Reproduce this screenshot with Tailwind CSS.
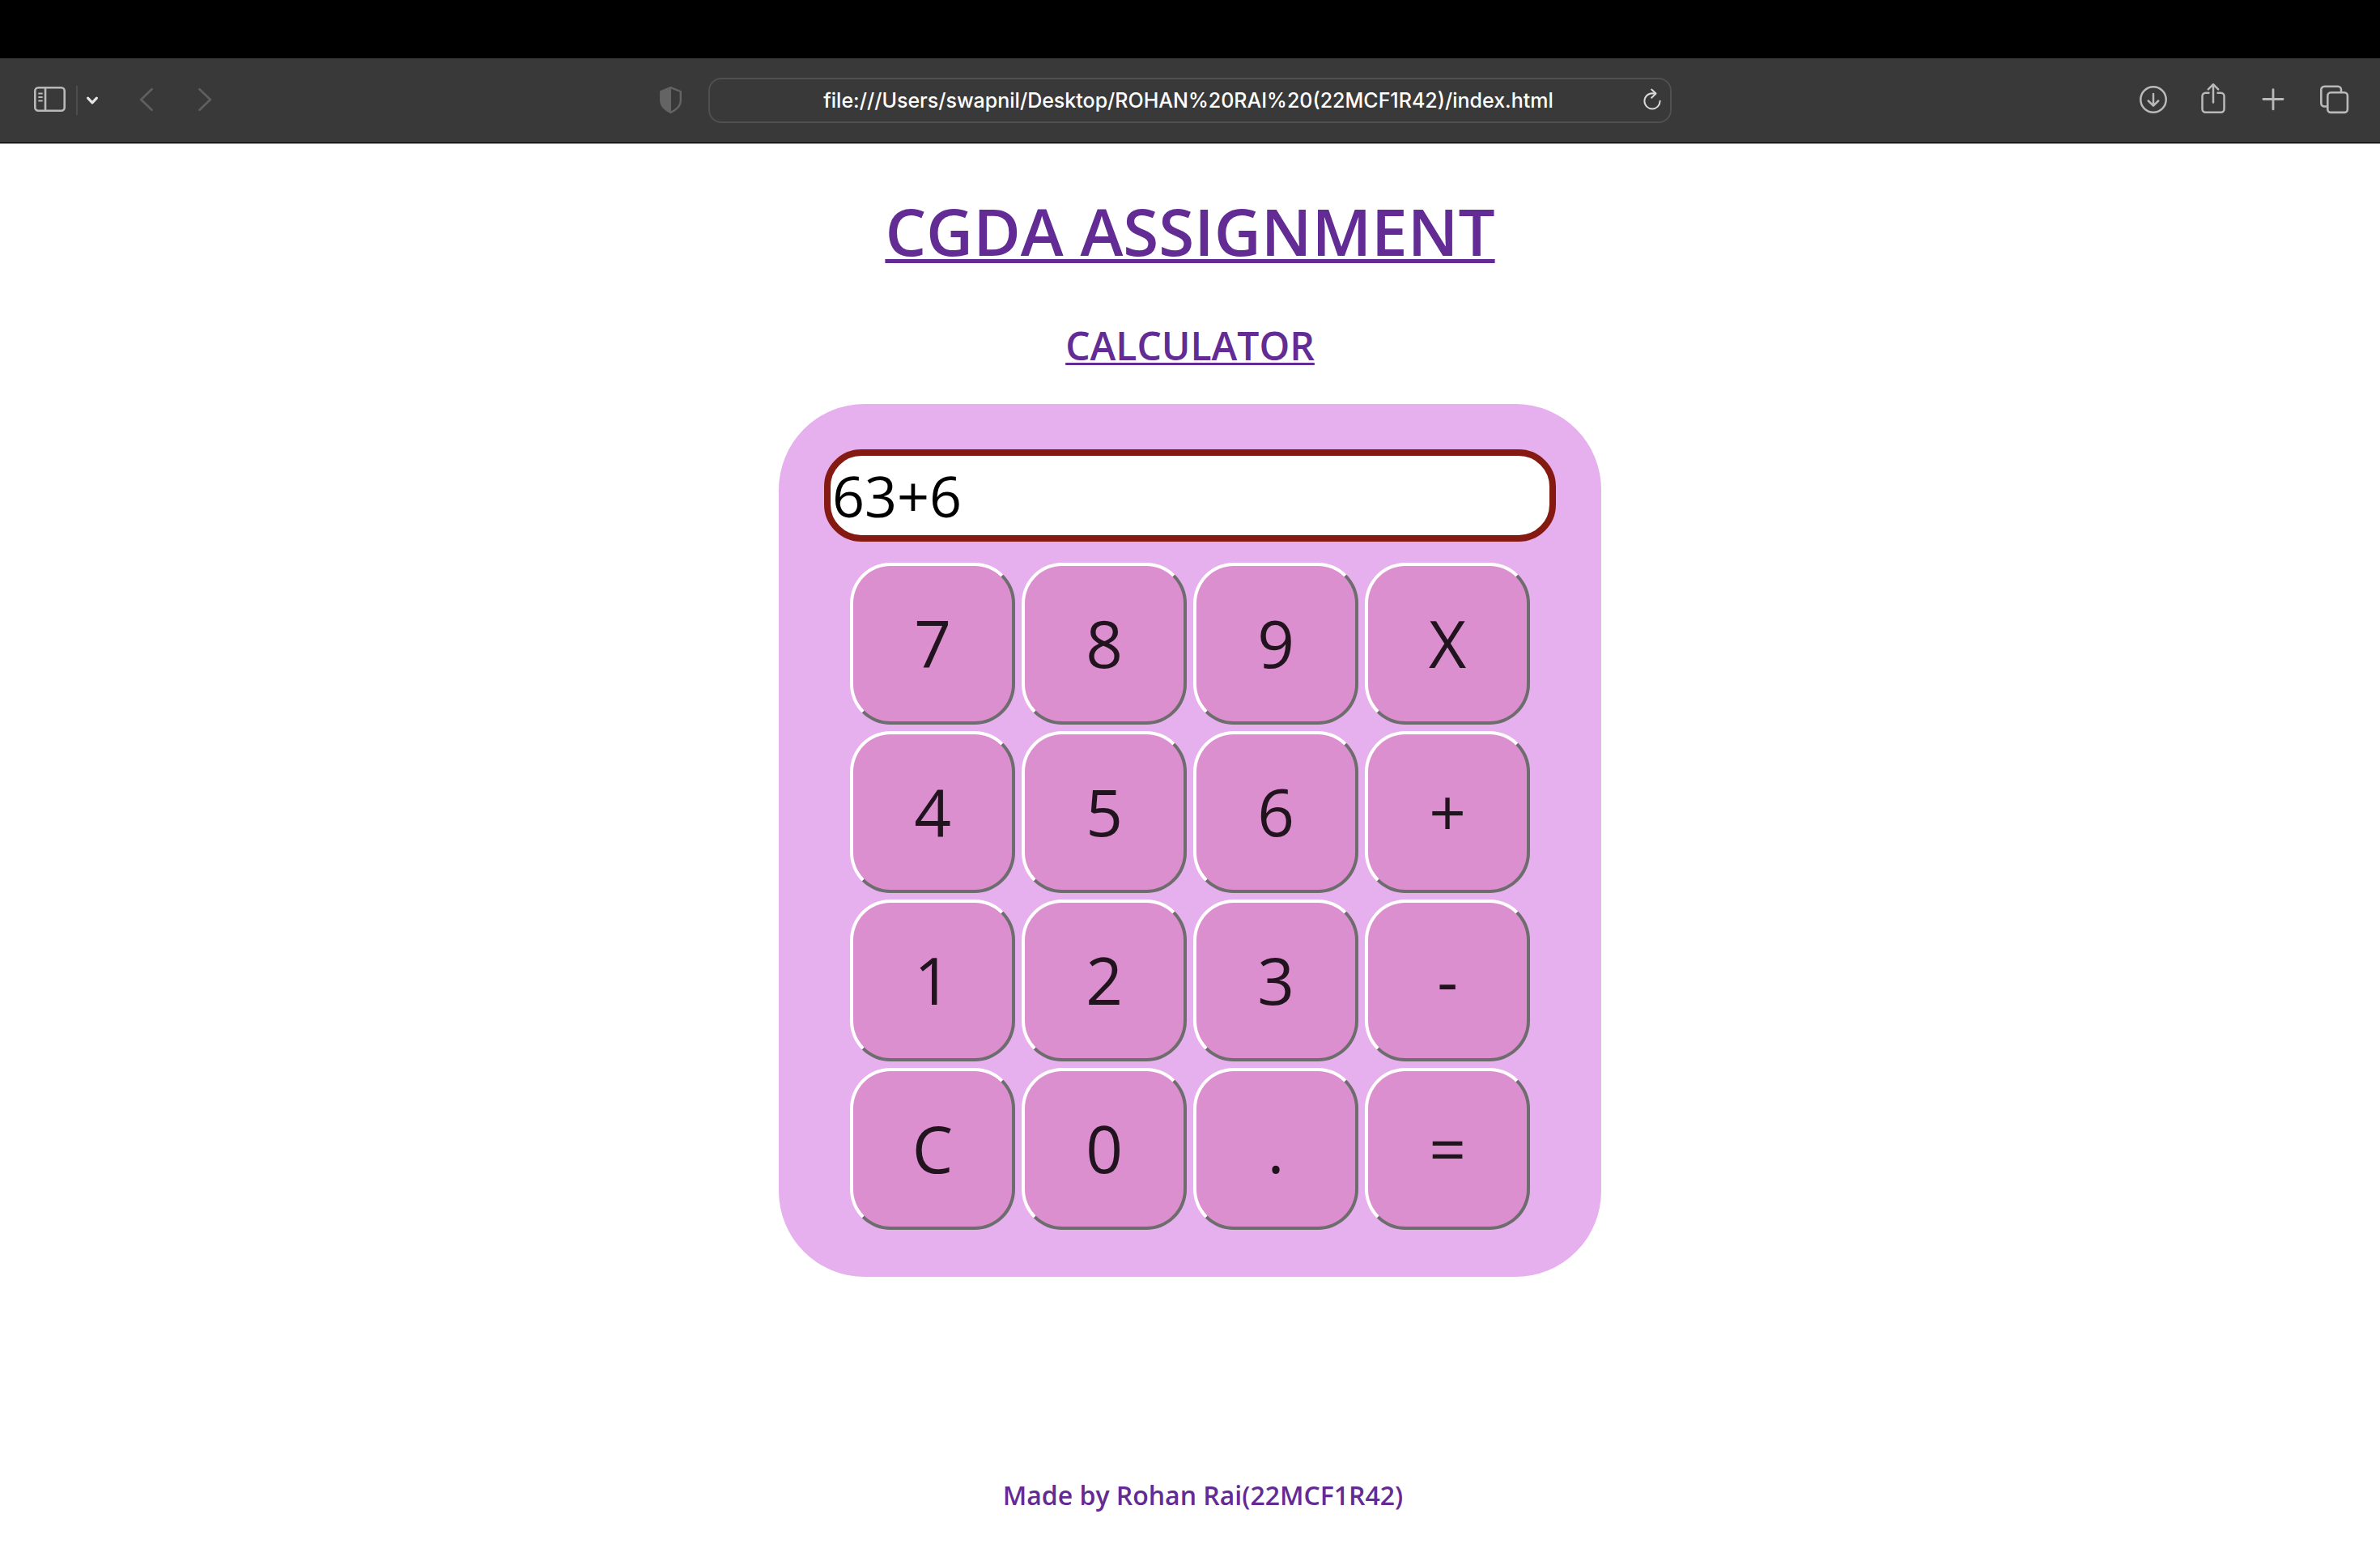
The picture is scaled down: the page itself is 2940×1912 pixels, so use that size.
<!DOCTYPE html>
<html lang="en">
<head>
<meta charset="utf-8">
<title>Calculator</title>
<script src="https://cdn.jsdelivr.net/npm/@tailwindcss/browser@4"></script>
</head>
<body class="flex min-h-screen flex-col bg-white font-['Open_Sans',sans-serif] text-[#622c94]">
<div class="h-[72px] shrink-0 bg-black"></div>
<header class="grid h-[106px] shrink-0 grid-cols-[1fr_minmax(0,1190px)_1fr] items-center border-b border-[#b0b0b0] bg-[#393939] pb-px text-[#b9b9b9] shadow-[inset_0_-1px_0_#000]">
  <div class="flex items-center pl-10">
    <button type="button" aria-label="Sidebar" class="h-11 w-11">
      <svg viewBox="0 0 44 44" class="h-11 w-11" fill="none" stroke="currentColor" stroke-width="2.6" stroke-linecap="round"><rect x="3.3" y="6.3" width="36.4" height="28.4" rx="4"/><path d="M16 7v27"/><path d="M8 13.5h4M8 18h4M8 22.5h4" stroke-width="1.8"/></svg>
    </button>
    <div class="ml-2.5 h-9 w-0.5 bg-[#4d4d4d]"></div>
    <button type="button" aria-label="Tab groups" class="ml-2.5 h-11 w-4">
      <svg viewBox="0 0 16 44" class="h-11 w-4" fill="none" stroke="#e6e6e6" stroke-width="3.2" stroke-linecap="round" stroke-linejoin="round"><path d="M2.6 19.2 8 24.8l5.4-5.6"/></svg>
    </button>
    <button type="button" aria-label="Back" class="ml-12 h-11 w-5">
      <svg viewBox="0 0 20 44" class="h-11 w-5" fill="none" stroke="#5f5f5f" stroke-width="2.8" stroke-linecap="round" stroke-linejoin="round"><path d="M17.5 8.3 4.2 21l13.3 12.7"/></svg>
    </button>
    <button type="button" aria-label="Forward" class="ml-[54px] h-11 w-5">
      <svg viewBox="0 0 20 44" class="h-11 w-5" fill="none" stroke="#5f5f5f" stroke-width="2.8" stroke-linecap="round" stroke-linejoin="round"><path d="M2.5 8.3 15.8 21 2.5 33.7"/></svg>
    </button>
    <button type="button" aria-label="Privacy report" class="mr-[30px] ml-auto h-11 w-8">
      <svg viewBox="0 0 32 44" class="h-11 w-8" fill="none" stroke="#646464" stroke-width="2.4" stroke-linejoin="round"><path d="M15.500 6.200 27.800 11V23c0 7-6 10.800-12.300 14C9.300 33.800 3.300 30 3.300 23V11z"/><path d="M15.500 6.200V37C9.300 33.800 3.300 30 3.300 23V11z" fill="#646464" stroke-width="1"/></svg>
    </button>
  </div>
  <div class="flex h-14 items-center rounded-2xl border-2 border-[#505050] pr-2 pl-8">
    <input type="text" aria-label="Address" value="file:///Users/swapnil/Desktop/ROHAN%20RAI%20(22MCF1R42)/index.html" class="min-w-0 flex-1 text-center font-[Inter,sans-serif] text-[25px] leading-8 font-medium text-white outline-none">
    <button type="button" aria-label="Reload" class="h-11 w-7">
      <svg viewBox="0 0 28 44" class="h-11 w-7" fill="none" stroke="#dadada" stroke-width="2" stroke-linecap="round" stroke-linejoin="round"><path d="M17.500 13.600 14 13.200A9.600 9.600 0 1 0 23.600 22.800"/><path d="M13.200 8.600 18.500 13.600 13.200 18.800"/></svg>
    </button>
  </div>
  <div class="flex items-center justify-end pr-9">
    <button type="button" aria-label="Downloads" class="h-11 w-9">
      <svg viewBox="0 0 36 44" class="h-11 w-9" fill="none" stroke="currentColor" stroke-width="2.500" stroke-linecap="round" stroke-linejoin="round"><circle cx="18" cy="21" r="15.700"/><path d="M18 14v14M11.800 22.500 18 28.700l6.200-6.200"/></svg>
    </button>
    <button type="button" aria-label="Share" class="ml-10 h-11 w-8">
      <svg viewBox="0 0 32 44" class="h-11 w-8" fill="none" stroke="currentColor" stroke-width="2.500" stroke-linecap="round" stroke-linejoin="round"><path d="M10.500 12.700H6.500a4 4 0 0 0-4 4v16a4 4 0 0 0 4 4h19a4 4 0 0 0 4-4v-16a4 4 0 0 0-4-4h-4"/><path d="M16 24.500V2.500M9.800 8.300 16 2.200l6.200 6.100"/></svg>
    </button>
    <button type="button" aria-label="New tab" class="ml-[42px] h-11 w-8">
      <svg viewBox="0 0 32 44" class="h-11 w-8" fill="none" stroke="currentColor" stroke-width="2.800" stroke-linecap="round"><path d="M16 8.700v24.200M3.900 20.500h24.200"/></svg>
    </button>
    <button type="button" aria-label="Tab overview" class="ml-10 h-11 w-10">
      <svg viewBox="0 0 40 44" class="h-11 w-10" fill="none" stroke="currentColor" stroke-width="2.600" stroke-linejoin="round"><rect x="11.300" y="12.300" width="24.600" height="24.600" rx="4"/><path d="M11 29.500H7.300a4 4 0 0 1-4-4V8.800a4 4 0 0 1 4-4H24a4 4 0 0 1 4 4V12"/></svg>
    </button>
  </div>
</header>
<main class="flex flex-1 flex-col items-center pt-[52px]">
  <h1 class="text-[80px] leading-[109px] font-semibold underline decoration-[5px] underline-offset-4 [text-decoration-skip-ink:none]">CGDA ASSIGNMENT</h1>
  <h2 class="mt-[55px] text-5xl leading-[65px] font-semibold underline decoration-[3px] underline-offset-[3px] [text-decoration-skip-ink:none]">CALCULATOR</h2>
  <section aria-label="Calculator" class="mt-10 flex w-full max-w-[1016px] flex-col items-center rounded-[106px] bg-[#e6afed] px-14 pt-14 pb-[58px]">
    <input type="text" aria-label="Result" value="63+6" class="h-[114px] w-full rounded-[46px] border-8 border-[#841a12] bg-white px-0.5 text-[70px] text-black outline-none">
    <div class="mt-[26px] grid w-full max-w-[840px] grid-cols-4 gap-2 text-[80px] text-[#21141f]">
      <button type="button" class="h-[200px] rounded-[50px] border-4 border-t-white border-r-[#6d6d6d] border-b-[#6d6d6d] border-l-white bg-[#db8fce] pb-0.5">7</button>
      <button type="button" class="h-[200px] rounded-[50px] border-4 border-t-white border-r-[#6d6d6d] border-b-[#6d6d6d] border-l-white bg-[#db8fce] pb-0.5">8</button>
      <button type="button" class="h-[200px] rounded-[50px] border-4 border-t-white border-r-[#6d6d6d] border-b-[#6d6d6d] border-l-white bg-[#db8fce] pb-0.5">9</button>
      <button type="button" class="h-[200px] rounded-[50px] border-4 border-t-white border-r-[#6d6d6d] border-b-[#6d6d6d] border-l-white bg-[#db8fce] pb-0.5">X</button>
      <button type="button" class="h-[200px] rounded-[50px] border-4 border-t-white border-r-[#6d6d6d] border-b-[#6d6d6d] border-l-white bg-[#db8fce] pb-0.5">4</button>
      <button type="button" class="h-[200px] rounded-[50px] border-4 border-t-white border-r-[#6d6d6d] border-b-[#6d6d6d] border-l-white bg-[#db8fce] pb-0.5">5</button>
      <button type="button" class="h-[200px] rounded-[50px] border-4 border-t-white border-r-[#6d6d6d] border-b-[#6d6d6d] border-l-white bg-[#db8fce] pb-0.5">6</button>
      <button type="button" class="h-[200px] rounded-[50px] border-4 border-t-white border-r-[#6d6d6d] border-b-[#6d6d6d] border-l-white bg-[#db8fce] pb-0.5">+</button>
      <button type="button" class="h-[200px] rounded-[50px] border-4 border-t-white border-r-[#6d6d6d] border-b-[#6d6d6d] border-l-white bg-[#db8fce] pb-0.5">1</button>
      <button type="button" class="h-[200px] rounded-[50px] border-4 border-t-white border-r-[#6d6d6d] border-b-[#6d6d6d] border-l-white bg-[#db8fce] pb-0.5">2</button>
      <button type="button" class="h-[200px] rounded-[50px] border-4 border-t-white border-r-[#6d6d6d] border-b-[#6d6d6d] border-l-white bg-[#db8fce] pb-0.5">3</button>
      <button type="button" class="h-[200px] rounded-[50px] border-4 border-t-white border-r-[#6d6d6d] border-b-[#6d6d6d] border-l-white bg-[#db8fce] pb-0.5">-</button>
      <button type="button" class="h-[200px] rounded-[50px] border-4 border-t-white border-r-[#6d6d6d] border-b-[#6d6d6d] border-l-white bg-[#db8fce] pb-0.5">C</button>
      <button type="button" class="h-[200px] rounded-[50px] border-4 border-t-white border-r-[#6d6d6d] border-b-[#6d6d6d] border-l-white bg-[#db8fce] pb-0.5">0</button>
      <button type="button" class="h-[200px] rounded-[50px] border-4 border-t-white border-r-[#6d6d6d] border-b-[#6d6d6d] border-l-white bg-[#db8fce] pb-0.5">.</button>
      <button type="button" class="h-[200px] rounded-[50px] border-4 border-t-white border-r-[#6d6d6d] border-b-[#6d6d6d] border-l-white bg-[#db8fce] pb-0.5">=</button>
    </div>
  </section>
  <footer class="mt-auto pb-[43px] pl-8 text-[32px] leading-[44px] font-semibold">Made by Rohan Rai(22MCF1R42)</footer>
</main>
</body>
</html>
